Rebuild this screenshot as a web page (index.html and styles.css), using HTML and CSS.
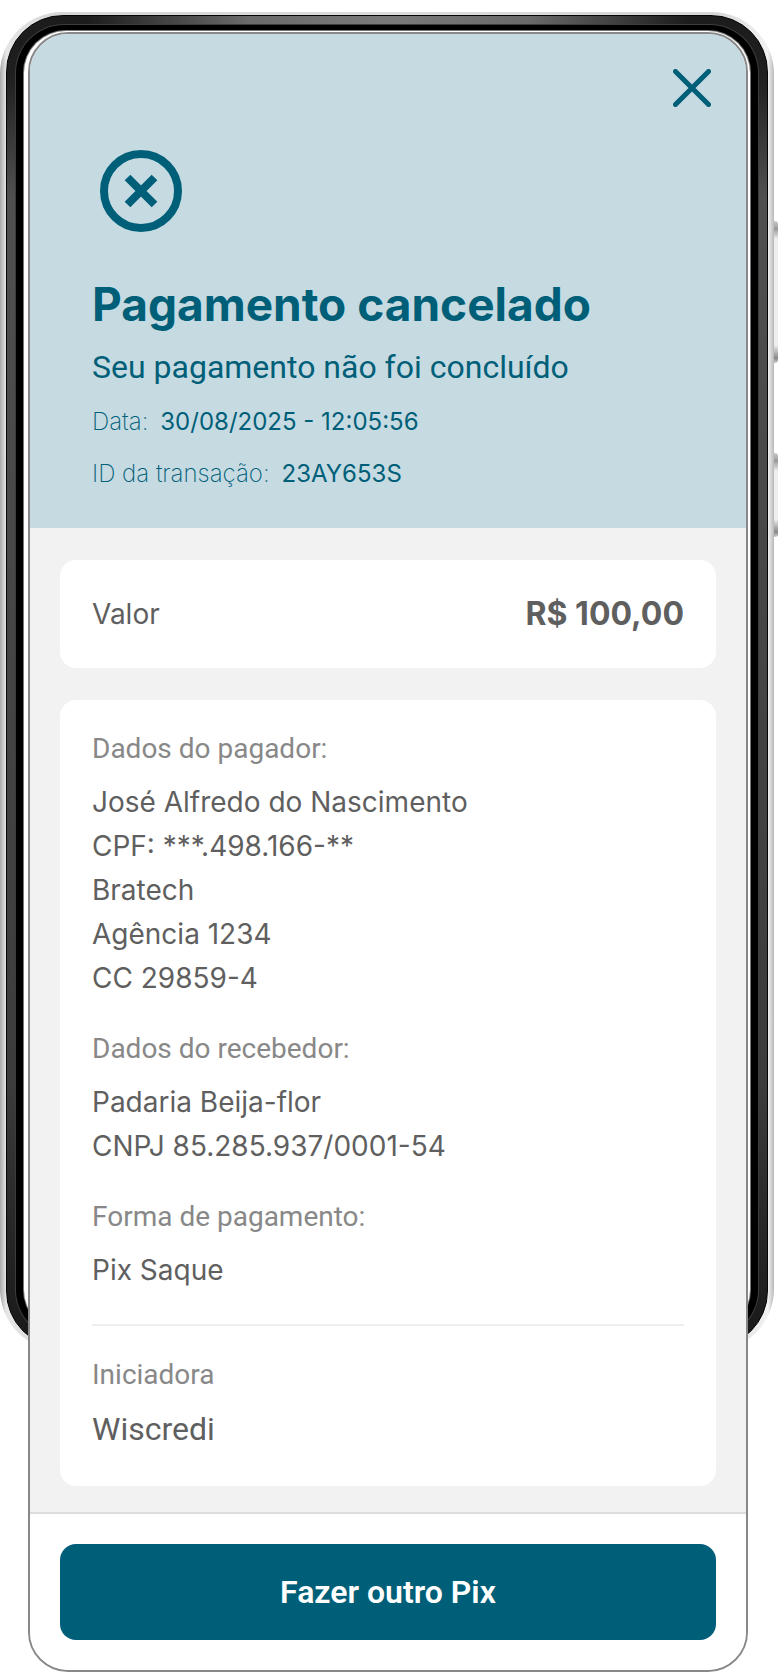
FILE: index.html
```html
<!DOCTYPE html>
<html lang="pt-BR">
<head>
    <meta charset="UTF-8">
    <meta name="viewport" content="width=device-width, initial-scale=1.0">
    <title>Pagamento cancelado</title>
    <link rel="stylesheet" href="styles.css">
</head>
<body>
    <div class="stage">
        <!-- phone behind the receipt -->
        <div class="phone" aria-hidden="true">
            <div class="phone-key phone-key-volume"></div>
            <div class="phone-key phone-key-power"></div>
            <div class="phone-metal">
                <div class="phone-frame">
                    <div class="phone-bezel">
                        <div class="phone-glass"></div>
                    </div>
                </div>
            </div>
        </div>

        <main class="screen">
            <header class="status">
                <button type="button" class="close" aria-label="Fechar">
                    <svg width="38" height="38" viewBox="0 0 38 38" fill="none" stroke="currentColor" stroke-width="5" stroke-linecap="round">
                        <path d="M2.5 2.5l33 33M35.5 2.5l-33 33"/>
                    </svg>
                </button>
                <svg class="status-icon" width="82" height="82" viewBox="0 0 82 82" fill="none" stroke="currentColor" stroke-width="8">
                    <circle cx="41" cy="41" r="37"/>
                    <path d="M27.500 27.500l27 27M54.500 27.500l-27 27"/>
                </svg>
                <h1>Pagamento cancelado</h1>
                <p class="subtitle">Seu pagamento não foi concluído</p>
                <dl class="meta">
                    <div class="meta-row">
                        <dt>Data:</dt>
                        <dd>30/08/2025 - 12:05:56</dd>
                    </div>
                    <div class="meta-row">
                        <dt>ID da transação:</dt>
                        <dd>23AY653S</dd>
                    </div>
                </dl>
            </header>

            <div class="content">
                <section class="card amount">
                    <span>Valor</span>
                    <strong>R$ 100,00</strong>
                </section>

                <section class="card details">
                    <div class="group">
                        <h2>Dados do pagador:</h2>
                        <p>José Alfredo do Nascimento</p>
                        <p>CPF: ***.498.166-**</p>
                        <p>Bratech</p>
                        <p>Agência 1234</p>
                        <p>CC 29859-4</p>
                    </div>
                    <div class="group">
                        <h2>Dados do recebedor:</h2>
                        <p>Padaria Beija-flor</p>
                        <p>CNPJ 85.285.937/0001-54</p>
                    </div>
                    <div class="group">
                        <h2>Forma de pagamento:</h2>
                        <p>Pix Saque</p>
                    </div>
                    <div class="group initiator">
                        <h2>Iniciadora</h2>
                        <p>Wiscredi</p>
                    </div>
                </section>
            </div>

            <footer class="actions">
                <button type="button" class="primary">Fazer outro Pix</button>
            </footer>
        </main>
    </div>
</body>
</html>
```

FILE: styles.css
```css
* {
    box-sizing: border-box;
}
body {
    margin: 0;
    background: #fff;
    color: #5f5f5f;
    font-family: Inter, sans-serif;
    font-size: 28px;
    line-height: 44px;
}
h1, h2, p, dl, dd {
    margin: 0;
}
button {
    border: none;
    padding: 0;
    cursor: pointer;
}
.stage {
    position: relative;
    padding: 32px 30px 0 28px;
}

/* phone */
.phone {
    position: absolute;
    top: 12px;
    left: 0;
    right: 4px;
    height: 1339px;
}
.phone-metal {
    position: relative;
    height: 100%;
    padding: 3px 6px;
    border-radius: 62px;
    background: linear-gradient(90deg, #a9a9a9 0, #e6e6e6 6px, #d6d6d6 60px, #dcdcdc 50%, #d6d6d6 calc(100% - 60px), #f2f2f2 calc(100% - 6px), #b8b8b8 100%);
}
.phone-frame {
    height: 100%;
    padding: 9px;
    border: 1px solid #050505;
    border-radius: 57px;
    background:
        radial-gradient(circle at 50% 0, #7a7a7a 0, #6a6a6a 140px, transparent 300px) top / 100% 10px no-repeat,
        linear-gradient(#1c1c1c 0, #1f1f1f 60px, #505050 180px, #444 50%, #3c3c3c 80%, #222 94%, #181818 100%);
}
.phone-bezel {
    height: 100%;
    padding: 6px 8px;
    border-radius: 48px;
    background: #000;
    box-shadow: 0 0 0 1px #3c3c3c;
}
.phone-glass {
    height: 100%;
    border-radius: 42px;
    background: #fff;
    box-shadow: 0 0 0 1px #777;
}
.phone-key {
    position: absolute;
    right: -4px;
    width: 8px;
    border-radius: 3px;
    background: linear-gradient(#ccc 0, #999 8px, #eee 18px, #eee calc(100% - 18px), #888 calc(100% - 5px), #ccc 100%);
}
.phone-key-volume {
    top: 209px;
    height: 142px;
}
.phone-key-power {
    top: 441px;
    height: 84px;
}

/* receipt */
.screen {
    position: relative;
    overflow: hidden;
    border: 2px solid #888;
    border-radius: 40px;
    background: #f2f2f2;
}
.status {
    position: relative;
    padding: 116px 62px 36px;
    background: #c6dae2;
    color: #005f78;
}
.close {
    position: absolute;
    top: 35px;
    right: 35px;
    background: none;
    color: inherit;
}
.close svg,
.status-icon {
    display: block;
}
.status-icon {
    margin: 0 8px 42px;
}
h1 {
    font-size: 46px;
    line-height: 60px;
    font-weight: 700;
}
.subtitle {
    margin-top: 11px;
    font-family: Roboto, sans-serif;
    font-size: 32px;
}
.meta {
    display: flex;
    flex-direction: column;
    gap: 16px;
    margin-top: 15px;
    font-size: 24px;
    line-height: 36px;
}
.meta-row {
    display: flex;
    gap: 12px;
}
.meta dt {
    font-weight: 200;
}
.content {
    display: flex;
    flex-direction: column;
    gap: 32px;
    padding: 32px 30px 26px;
}
.card {
    padding: 32px;
    border-radius: 16px;
    background: #fff;
}
.amount {
    display: flex;
    justify-content: space-between;
    align-items: center;
}
.amount strong {
    font-size: 32px;
}
.details {
    padding: 27px 32px 35px;
}
.group + .group {
    margin-top: 27px;
}
.group h2 {
    margin-bottom: 9px;
    color: #888;
    font-family: Roboto, sans-serif;
    font-size: 28px;
    font-weight: 400;
}
.group + .initiator {
    margin-top: 32px;
    padding-top: 27px;
    border-top: 2px solid #eee;
}
.initiator p {
    margin-top: 10px;
    font-family: Roboto, sans-serif;
    font-size: 32px;
}
.initiator h2 {
    margin-bottom: 0;
}
.actions {
    padding: 30px;
    border-top: 2px solid #ddd;
    background: #fff;
}
.primary {
    width: 100%;
    padding: 26px;
    border-radius: 16px;
    background: #005f78;
    color: #fff;
    font-family: Roboto, sans-serif;
    font-size: 32px;
    font-weight: 600;
    line-height: 44px;
}
```
